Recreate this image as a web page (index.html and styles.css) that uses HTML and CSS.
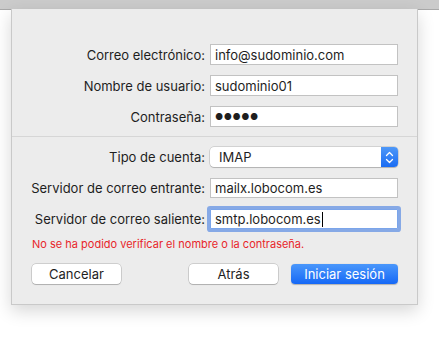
FILE: index.html
```html
<!DOCTYPE html>
<html lang="es">
<head>
<meta charset="utf-8">
<link rel="stylesheet" href="styles.css">
</head>
<body>
<div class="topbar"></div>
<div class="dialog">
  <div class="group">
    <div class="row"><label class="lbl">Correo electrónico:</label><div class="field">info@sudominio.com</div></div>
    <div class="row"><label class="lbl">Nombre de usuario:</label><div class="field">sudominio01</div></div>
    <div class="row"><label class="lbl">Contraseña:</label><div class="field dots">●●●●●</div></div>
  </div>
  <div class="sep"></div>
  <div class="group group2">
    <div class="row"><label class="lbl">Tipo de cuenta:</label>
      <div class="select"><span class="sel-text">IMAP</span>
        <span class="stepper"><svg width="9" height="13" viewBox="0 0 9 13"><path d="M1.5 4.5 L4.5 1.5 L7.5 4.5 M1.5 8.5 L4.5 11.5 L7.5 8.5" fill="none" stroke="#fff" stroke-width="1.3" stroke-linecap="round" stroke-linejoin="round"/></svg></span>
      </div>
    </div>
    <div class="row"><label class="lbl">Servidor de correo entrante:</label><div class="field">mailx.lobocom.es</div></div>
    <div class="row"><label class="lbl">Servidor de correo saliente:</label><div class="field focus">smtp.lobocom.es<span class="caret"></span></div></div>
  </div>
  <p class="error">No se ha podido verificar el nombre o la contraseña.</p>
  <div class="buttons">
    <button class="btn cancel">Cancelar</button>
    <div class="right">
      <button class="btn back">Atrás</button>
      <button class="btn primary">Iniciar sesión</button>
    </div>
  </div>
</div>
</body>
</html>
```

FILE: styles.css
```css
* { box-sizing: border-box; }
html, body {
  margin: 0;
  padding: 0;
  background: #ffffff;
  width: 439px;
  height: 351px;
  overflow: hidden;
  font-family: Inter, "Liberation Sans", Arial, sans-serif;
  font-size: 13px;
  color: #1e1e1e;
}
.topbar {
  height: 10px;
  background: #cbcbcb;
  border-bottom: 1px solid #a9a9a9;
}
.dialog {
  margin-left: 11px;
  width: 407px;
  height: 296px;
  margin-top: -1px;
  background: #ececec;
  border: 1px solid #c9c9c9;
  border-top: none;
  box-shadow: 0 6px 16px rgba(0,0,0,0.16);
  padding-top: 35px;
  display: flex;
  flex-direction: column;
}
.group {
  display: flex;
  flex-direction: column;
  gap: 10px;
  padding-right: 19px;
}
.group .row { height: 21px; }
.group2 { gap: 11px; }
.group2 .row { height: 20px; }
.row {
  display: flex;
  justify-content: flex-end;
  align-items: center;
}
.lbl {
  margin-right: 5px;
  white-space: nowrap;
  line-height: 16px;
}
.field {
  width: 188px;
  height: 100%;
  background: #fff;
  border: 1px solid #c2c2c2;
  padding: 0 4px;
  line-height: 18px;
  white-space: nowrap;
  display: flex;
  align-items: center;
}
.dots { font-size: 9px; letter-spacing: 0.5px; }
.focus {
  border-color: #7ba5ea;
  box-shadow: 0 0 0 3px #86a9e6;
  border-radius: 1px;
}
.caret {
  display: inline-block;
  width: 1px;
  height: 15px;
  background: #000;
  margin-left: 1px;
}
.sep {
  height: 1px;
  background: #d6d6d6;
  margin: 9px 0 10px;
}
.select {
  width: 188px;
  height: 20px;
  background: #fff;
  border-radius: 4px;
  box-shadow: 0 0 0 0.5px rgba(0,0,0,0.22), 0 1px 1px rgba(0,0,0,0.15);
  display: flex;
  align-items: center;
  justify-content: space-between;
  overflow: hidden;
}
.sel-text { padding-left: 9px; }
.stepper {
  width: 17px;
  height: 20px;
  background: linear-gradient(#4e98f8, #1a6cf3);
  display: flex;
  align-items: center;
  justify-content: center;
}
.error {
  margin: 9px 0 0 20px;
  color: #e8262b;
  font-size: 11px;
  line-height: 13px;
}
.buttons {
  margin-top: 13px;
  padding: 0 19px 0 20px;
  display: flex;
  justify-content: space-between;
}
.right { display: flex; gap: 13px; }
.btn {
  font-family: inherit;
  font-size: 13px;
  height: 20px;
  border-radius: 4px;
  border: none;
  background: #fff;
  color: #1e1e1e;
  box-shadow: 0 0 0 0.5px rgba(0,0,0,0.25), 0 1px 1px rgba(0,0,0,0.15);
  padding: 0;
  line-height: 20px;
}
.cancel { width: 89px; }
.back { width: 89px; }
.primary {
  width: 107px;
  color: #fff;
  background: linear-gradient(#4a97fb, #1568f6);
  box-shadow: 0 0.5px 1px rgba(0,0,0,0.25);
}
```
